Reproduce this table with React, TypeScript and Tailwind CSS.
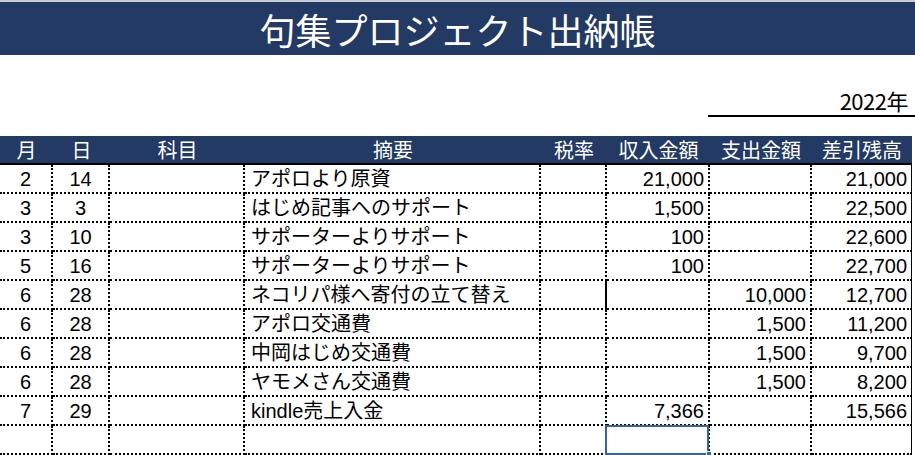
import React from 'react'

type Row = {
  month: string
  day: string
  subject: string
  memo: string
  tax: string
  income: string
  expense: string
  balance: string
  small?: boolean
}

const rows: Row[] = [
  { month: '2', day: '14', subject: '', memo: 'アポロより原資', tax: '', income: '21,000', expense: '', balance: '21,000' },
  { month: '3', day: '3', subject: '', memo: 'はじめ記事へのサポート', tax: '', income: '1,500', expense: '', balance: '22,500', small: true },
  { month: '3', day: '10', subject: '', memo: 'サポーターよりサポート', tax: '', income: '100', expense: '', balance: '22,600' },
  { month: '5', day: '16', subject: '', memo: 'サポーターよりサポート', tax: '', income: '100', expense: '', balance: '22,700' },
  { month: '6', day: '28', subject: '', memo: 'ネコリパ様へ寄付の立て替え', tax: '', income: '', expense: '10,000', balance: '12,700' },
  { month: '6', day: '28', subject: '', memo: 'アポロ交通費', tax: '', income: '', expense: '1,500', balance: '11,200' },
  { month: '6', day: '28', subject: '', memo: '中岡はじめ交通費', tax: '', income: '', expense: '1,500', balance: '9,700' },
  { month: '6', day: '28', subject: '', memo: 'ヤモメさん交通費', tax: '', income: '', expense: '1,500', balance: '8,200' },
  { month: '7', day: '29', subject: '', memo: 'kindle売上入金', tax: '', income: '7,366', expense: '', balance: '15,566' },
]

const headers = ['月', '日', '科目', '摘要', '税率', '収入金額', '支出金額', '差引残高']

const grid = 'grid grid-cols-[53px_57px_135px_296px_66px_103px_102px_100px] w-[912px]'
const cell = 'h-[29px] border-b-2 border-r-2 border-dotted border-black flex items-center text-[20px] leading-none text-black'
const lastCell = 'border-r-[1px] [border-right-style:solid]'

export default function App() {
  return (
    <div className="w-[915px] h-[455px] overflow-hidden bg-white font-['Liberation_Sans','Noto_Sans_CJK_JP',sans-serif]">
      {/* Title band */}
      <div className="h-[2px] bg-[#c9cdd4]" />
      <div className="h-[53px] bg-[#223a64] flex items-center justify-center">
        <h1 className="text-white text-[36px] leading-none font-['Noto_Sans_CJK_JP',sans-serif]">
          句集プロジェクト出納帳
        </h1>
      </div>

      {/* Year */}
      <div className="pt-[30px] flex justify-end">
        <div className="w-[207px] border-b-2 border-black text-right pr-[7px] text-[22px] leading-[30px] text-black font-['Noto_Sans_CJK_JP',sans-serif] tracking-[-0.5px]">
          2022年
        </div>
      </div>

      {/* Table */}
      <div className="mt-[19px]">
        <div className={`${grid} h-[29px] bg-[#223a64] border-b-2 border-black`}>
          {headers.map((h) => (
            <div
              key={h}
              className="flex items-center justify-center text-white text-[20px] leading-none font-['Noto_Sans_CJK_JP',sans-serif]"
            >
              {h}
            </div>
          ))}
        </div>

        {rows.map((r, i) => (
          <div key={i} className={grid}>
            <div className={`${cell} justify-center ${r.small ? 'text-[17px]' : ''}`}>{r.month}</div>
            <div className={`${cell} justify-center ${r.small ? 'text-[17px]' : ''}`}>{r.day}</div>
            <div className={cell}>{r.subject}</div>
            <div className={`${cell} pl-[6px]`}>{r.memo}</div>
            <div className={`${cell} justify-end pr-[5px] ${i === 4 ? '[border-right-style:solid]' : ''}`}>{r.tax}</div>
            <div className={`${cell} justify-end pr-[4px]`}>{r.income}</div>
            <div className={`${cell} justify-end pr-[4px]`}>{r.expense}</div>
            <div className={`${cell} justify-end pr-[4px] ${lastCell}`}>{r.balance}</div>
          </div>
        ))}

        {/* Empty row with selected cell */}
        <div className={grid}>
          <div className={cell} />
          <div className={cell} />
          <div className={cell} />
          <div className={cell} />
          <div className={cell} />
          <div className={`${cell} relative`}>
            <div className="absolute -left-[2px] -top-[1px] w-[104px] h-[30px] border-2 border-[#2f64a8]" />
            <div className="absolute -right-[4px] bottom-[-4px] w-[6px] h-[6px] bg-[#2f64a8] border border-white" />
          </div>
          <div className={cell} />
          <div className={`${cell} ${lastCell}`} />
        </div>
      </div>
    </div>
  )
}
